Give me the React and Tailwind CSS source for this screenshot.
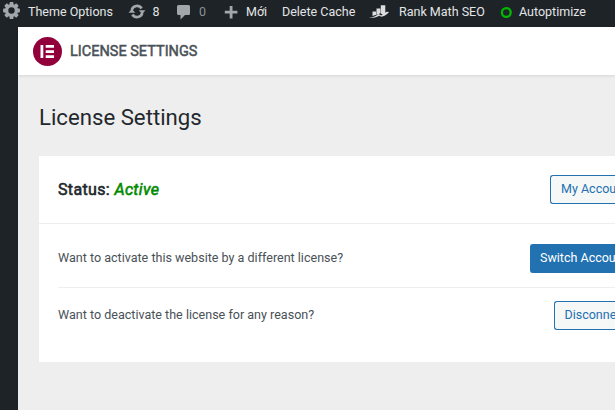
const Label = ({ w, className = "", children }) => (
  <svg className={`block h-6 shrink-0 overflow-visible ${className}`} width={w} height="24">
    {children}
  </svg>
);

function AdminBar() {
  return (
    <div className="flex h-[27px] items-start bg-[#1d2327] text-[12.5px] leading-[23px] text-[#e4e5e6] whitespace-nowrap">
      <Label w="28">
        <g transform="translate(11.5 10.5)" fill="#a2a7ac">
          {[0, 45, 90, 135, 180, 225, 270, 315].map((a) => (
            <path key={a} d="M-1.7-8.4h3.400l.7 3.600h-4.800z" transform={`rotate(${a})`} />
          ))}
          <circle r="4.700" fill="none" stroke="#a2a7ac" strokeWidth="3" />
        </g>
      </Label>
      <span className="w-[101px]">Theme Options</span>
      <Label w="23.500">
        <g transform="translate(8 11.500)" fill="none" stroke="#a2a7ac" strokeWidth="2.700">
          <path d="M-5.300-1.600A5.500 5.500 0 0 1 4.600-3" />
          <path d="M5.300 1.600A5.500 5.500 0 0 1-4.600 3" />
          <path d="M1.800-1.300h6.600L5.200 2.700z M-1.800 1.300h-6.600l3.200-4z" fill="#a2a7ac" stroke="none" />
        </g>
      </Label>
      <span className="w-[23.500px]">8</span>
      <Label w="23">
        <path d="M2.500 5h10Q14 5 14 6.500v7Q14 15 12.500 15H9L4.500 19.500V15H2.500Q1 15 1 13.500v-7Q1 5 2.500 5z" fill="#a2a7ac" />
      </Label>
      <span className="w-[25px] text-[#8c9196]">0</span>
      <Label w="22">
        <path d="M5.700 6h2.800v4.800h4.900v2.700H8.500v4.900H5.700v-4.900H.800v-2.700h4.900z" fill="#a2a7ac" />
      </Label>
      <span className="w-[36px]">Mới</span>
      <span className="w-[88px]">Delete Cache</span>
      <Label w="29">
        <g fill="#dcdddf">
          <path d="M2.500 11.500h3.600v3.200L2.500 16zM6.500 8.500h3.900v4.700l-3.900 1.700zM10.800 5.200h4.500v9l-2 .8-2.500-1.500z" />
          <path d="M-1 17.500c4.400-.4 7.100-1.600 9.700-3.600l2.500 1.600 5.400-3.700 2.500.2c-3 3.300-5.900 5-8.600 4.600l-1-.900c-3 1.700-7 2.400-10.500 1.800z" />
        </g>
      </Label>
      <span className="w-[101px]">Rank Math SEO</span>
      <Label w="19">
        <circle cx="6.300" cy="12.500" r="4.400" fill="none" stroke="#00b800" strokeWidth="2.300" />
      </Label>
      <span>Autoptimize</span>
    </div>
  );
}

const buttonBase =
  "flex h-[29px] shrink-0 items-center rounded-[3px] border border-[#2271b1] text-[12.5px] whitespace-nowrap";

export default function App() {
  return (
    <div className="h-[410px] w-[615px] overflow-hidden bg-[#eeeeee] font-[Roboto,sans-serif]">
      <AdminBar />
      <div className="flex h-[383px]">
        <aside className="w-[17.500px] shrink-0 bg-[#1d2327]" />
        <main className="min-w-0 flex-1">
          <header className="flex h-12 items-center bg-white pl-[15.500px] shadow-[0_1px_3px_rgba(0,0,0,0.1)]">
            <svg width="29" height="29" viewBox="0 0 29 29">
              <circle cx="14.500" cy="14.500" r="14.500" fill="#92003b" />
              <path d="M7.500 8h2.800v13H7.500zM12.700 8H21v2.700h-8.300zM12.700 13.200H21v2.700h-8.300zM12.700 18.300H21V21h-8.300z" fill="#fff" />
            </svg>
            <h1 className="ml-[8px] pt-[2px] text-[14.500px] text-[#495157] [-webkit-text-stroke:0.5px]">LICENSE SETTINGS</h1>
          </header>
          <h2 className="ml-[21.500px] mt-[27px] h-[54px] text-[22.200px] leading-[30px] text-[#23282d]">License Settings</h2>
          <section className="ml-[21px] h-[206px] bg-white">
            <div className="flex h-[68px] items-center justify-between border-b border-[#eeeeee] pl-[19.500px]">
              <h3 className="text-base tracking-[0.35px] text-[#23282d] [-webkit-text-stroke:0.6px]">
                Status: <i className="text-[#008a00]">Active</i>
              </h3>
              <div className={`${buttonBase} w-[65px] rounded-r-none border-r-0 bg-[#f6f7f7] pl-[10px] text-[#2271b1]`}>My Account</div>
            </div>
            <div className="ml-[19px] flex h-16 items-center justify-between border-b border-[#eeeeee] pt-[5px] text-[12.550px] text-[#495157]">
              <span className="pl-[0.5px]">Want to activate this website by a different license?</span>
              <div className={`${buttonBase} w-[85px] rounded-r-none border-r-0 bg-[#2271b1] pl-[9px] text-white`}>Switch Account</div>
            </div>
            <div className="ml-[19px] flex h-[54px] items-center justify-between text-[12.550px] text-[#495157]">
              <span className="pl-[0.5px]">Want to deactivate the license for any reason?</span>
              <div className={`${buttonBase} w-[61px] rounded-r-none border-r-0 bg-[#f6f7f7] pl-[9.500px] text-[#2271b1]`}>Disconnect</div>
            </div>
          </section>
        </main>
      </div>
    </div>
  );
}
